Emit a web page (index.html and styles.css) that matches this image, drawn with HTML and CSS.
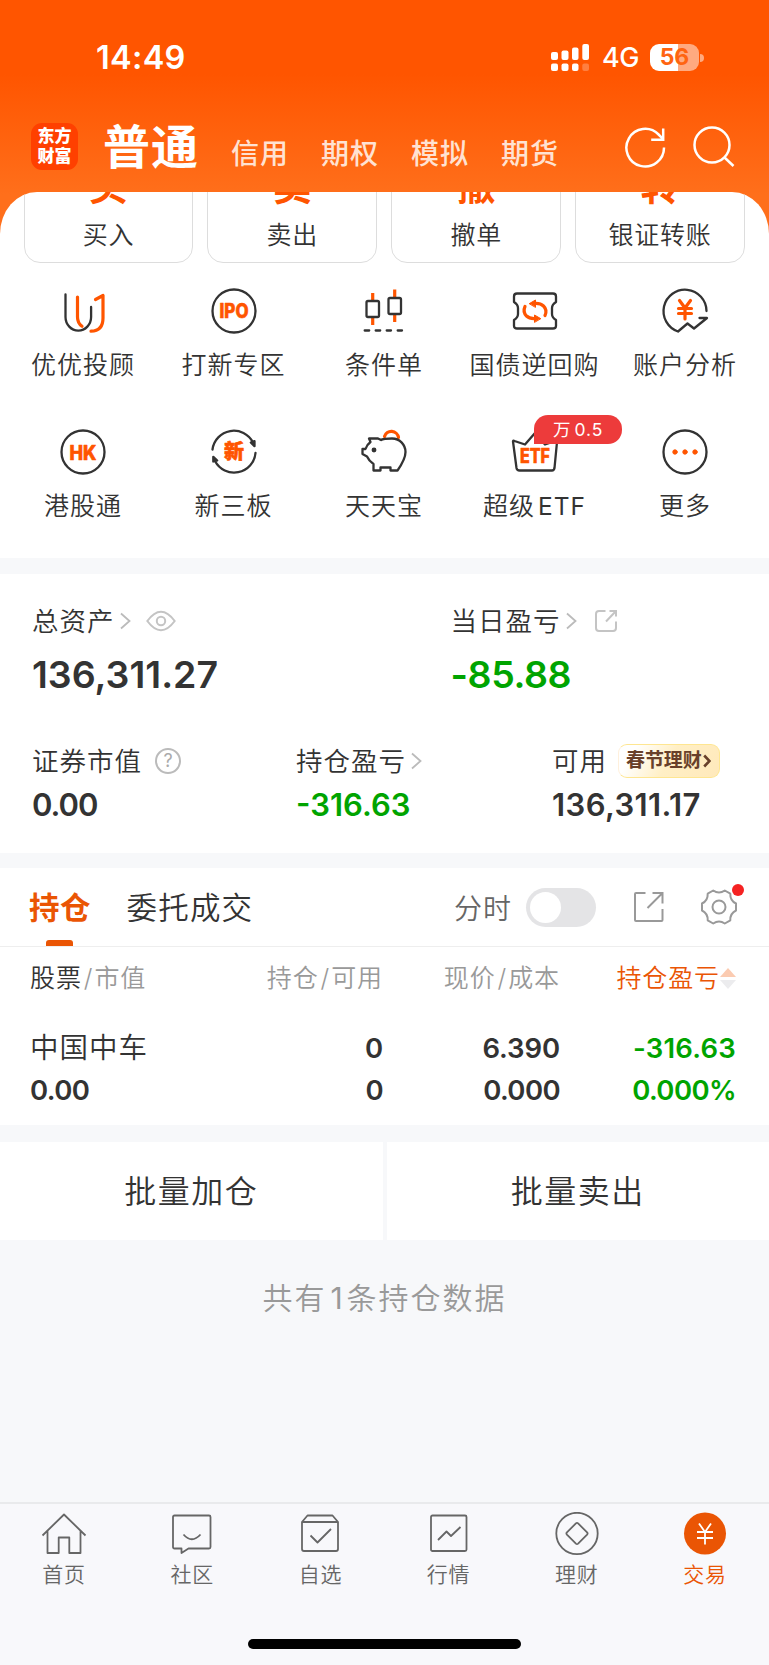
FILE: index.html
```html
<!DOCTYPE html>
<html lang="zh-CN">
<head>
    <meta charset="UTF-8">
    <meta name="viewport" content="width=device-width, initial-scale=1.0">
    <title>交易 - 东方财富</title>
    <link rel="stylesheet" href="styles.css">
</head>
<body>
    <div class="phone">
        <div class="status-bar">
            <div class="clock">14:49</div>
            <div class="status-icons">
                <svg class="signal" width="38" height="28" viewBox="0 0 38 28">
                    <rect x="0" y="8" width="7" height="8" rx="2"/><rect x="10.500" y="6.500" width="7" height="9.500" rx="2"/><rect x="21" y="3.500" width="6.500" height="12.500" rx="2"/><rect x="31.300" y="0" width="6.700" height="16" rx="2"/>
                    <rect x="0" y="19.500" width="7" height="7.500" rx="2"/><rect x="10.500" y="19.500" width="7" height="7.500" rx="2"/><rect x="21" y="19.500" width="6.500" height="7.500" rx="2"/><rect x="31.300" y="19.500" width="6.700" height="7.500" rx="2" opacity=".25"/>
                </svg>
                <span class="network">4G</span>
                <div class="battery">56</div>
                <div class="battery-tip"></div>
            </div>
        </div>

        <div class="nav">
            <div class="logo">东方<br>财富</div>
            <div class="nav-tabs">
                <div class="nav-tab active">普通</div>
                <div class="nav-tab">信用</div>
                <div class="nav-tab">期权</div>
                <div class="nav-tab">模拟</div>
                <div class="nav-tab">期货</div>
            </div>
            <svg class="nav-icon" width="44" height="44" viewBox="0 0 44 44"><path d="M41 22.500A18.800 18.800 0 1 1 35.600 9.500L39.500 13.500M40.200 3.500V14.800H28.200"/></svg>
            <svg class="nav-icon" width="44" height="44" viewBox="0 0 44 44"><circle cx="20" cy="20" r="17.500"/><path d="M32.500 32.500L41.500 41"/></svg>
        </div>

        <div class="sheet">
            <div class="cards">
                <div class="card"><b>买</b><span>买入</span></div>
                <div class="card"><b>卖</b><span>卖出</span></div>
                <div class="card"><b>撤</b><span>撤单</span></div>
                <div class="card"><b>转</b><span>银证转账</span></div>
            </div>
            <div class="services">
                <div class="service">
                    <svg class="icon" viewBox="0 0 46 46"><path d="M5.500 6.500V29a12.700 13.500 0 0 0 25.600 0V19"/><path class="o" d="M17.500 9V29Q17.500 35 22 38.300M35.500 11.500L43 7.500V30Q43 43 31 43.200"/></svg>
                    <span>优优投顾</span>
                </div>
                <div class="service">
                    <svg class="icon" viewBox="0 0 46 46"><circle cx="23" cy="23" r="21.500"/><text x="23" y="30" textLength="29" lengthAdjust="spacingAndGlyphs">IPO</text></svg>
                    <span>打新专区</span>
                </div>
                <div class="service">
                    <svg class="icon" viewBox="0 0 46 46"><path class="o c" d="M11.700 5V12M11.700 29.500V37M33.700 1.500V9M33.700 26.500V34"/><rect x="5.500" y="13" width="12.500" height="16" rx="1.500"/><rect x="27.500" y="10" width="12.500" height="16" rx="1.500"/><path d="M3.700 42.500H8.200M14.700 42.500H19.200M25.700 42.500H30M36.700 42.500H41"/></svg>
                    <span>条件单</span>
                </div>
                <div class="service">
                    <svg class="icon" viewBox="0 0 46 46"><path d="M5 5.500H41Q44 5.500 44 8.500V14Q40 16.500 40 20V26Q40 29.500 44 32V38Q44 40.500 41 40.500H5Q2 40.500 2 38V32Q6 29.500 6 26V20Q6 16.500 2 14V8.500Q2 5.500 5 5.500Z"/><path class="o" d="M13 18.500Q10.500 24 14.500 28Q17.500 30.800 23 30.500M33 27.500Q35.500 22 31.500 18Q28.500 15.200 23 15.500"/><path class="of" d="M17.500 15.500L23.500 12V19ZM28.500 30.500L22.500 27V34Z"/></svg>
                    <span>国债逆回购</span>
                </div>
                <div class="service">
                    <svg class="icon" viewBox="0 0 46 46"><path d="M44.500 23A21.500 21.500 0 1 0 16 43.500L25.500 35.500L32 40.500L45 30H37.500"/><path class="o" d="M17.500 12.500L23 20L28.500 12.500M16.500 20.500H29.500M16.500 25.500H29.500M23 20V31"/></svg>
                    <span>账户分析</span>
                </div>
                <div class="service">
                    <svg class="icon" viewBox="0 0 46 46"><circle cx="23" cy="23" r="21.500"/><text x="23" y="30.500" textLength="27" lengthAdjust="spacingAndGlyphs">HK</text></svg>
                    <span>港股通</span>
                </div>
                <div class="service">
                    <svg class="icon" viewBox="0 0 46 46"><path d="M1.500 20.500A21.500 21.500 0 0 1 42 13.500M44.500 24A21.500 21.500 0 0 1 4 32"/><path class="df" d="M39.800 13.500L43.500 12.200V17.200Z M6.200 31.500L2.300 32.500V27.800Z"/><text x="23" y="30" class="cn">新</text></svg>
                    <span>新三板</span>
                </div>
                <div class="service">
                    <svg class="icon" viewBox="0 0 46 46"><path class="o" d="M23.500 7.500A7.200 7.200 0 0 1 37.500 8.500"/><path d="M8 9.500H17L20 11Q22 9.500 31 9.500C39 9.500 44.500 16 44.500 23Q44.500 30 36.500 41.500H29.500V38.500H19.500V41.500H12.500V35Q8 32 6 27.500L1.500 25V20H4.500Q6 15.500 9.500 13Z"/><circle class="df" cx="13" cy="21" r="1.300"/></svg>
                    <span>天天宝</span>
                </div>
                <div class="service">
                    <svg class="icon" viewBox="0 0 46 46"><path d="M1 12.500Q1 11 2.500 12L13 15.500L23 4L33 15.500L43.500 12Q45 11.500 45 13L42.500 39Q42 41.500 40 41.500H7.500Q5 41.500 4.500 39Z"/><text x="23" y="34" textLength="30" lengthAdjust="spacingAndGlyphs">ETF</text></svg>
                    <div class="badge">万 0.5</div>
                    <span>超级<span class="latin">ETF</span></span>
                </div>
                <div class="service">
                    <svg class="icon" viewBox="0 0 46 46"><circle cx="23" cy="23" r="21.500"/><g class="of"><circle cx="13" cy="23" r="2.200"/><circle cx="23" cy="23" r="2.200"/><circle cx="33" cy="23" r="2.200"/></g></svg>
                    <span>更多</span>
                </div>
            </div>
        </div>

        <div class="assets">
            <div class="asset-row main-row">
                <div class="asset">
                    <div class="asset-label">总资产<svg class="arrow" width="11" height="18" viewBox="0 0 11 18"><path d="M1 1.500L9.500 9L1 16.500"/></svg>
                        <svg class="eye" width="30" height="22" viewBox="0 0 30 22"><path d="M1.300 11Q15-7.500 28.700 11Q15 29.500 1.300 11Z"/><circle cx="15" cy="11" r="4.200"/></svg>
                    </div>
                    <div class="asset-value big">136,311.27</div>
                </div>
                <div class="asset">
                    <div class="asset-label">当日盈亏<svg class="arrow" width="11" height="18" viewBox="0 0 11 18"><path d="M1 1.500L9.500 9L1 16.500"/></svg>
                        <svg class="share-sm" width="24" height="24" viewBox="0 0 24 24"><path d="M11.500 2H5Q2 2 2 5V19Q2 22 5 22H19Q22 22 22 19V12.500M12 12.500L22 2M15.500 2H22V7.500"/></svg>
                    </div>
                    <div class="asset-value big day green">-85.88</div>
                </div>
            </div>
            <div class="asset-row sub-row">
                <div class="asset">
                    <div class="asset-label">证券市值<div class="help">?</div></div>
                    <div class="asset-value zero">0.00</div>
                </div>
                <div class="asset">
                    <div class="asset-label">持仓盈亏<svg class="arrow" width="11" height="18" viewBox="0 0 11 18"><path d="M1 1.500L9.500 9L1 16.500"/></svg></div>
                    <div class="asset-value green">-316.63</div>
                </div>
                <div class="asset">
                    <div class="asset-label">可用<div class="promo">春节理财<svg width="8" height="14" viewBox="0 0 8 14"><path d="M1.200 1.500L6.500 7L1.200 12.500"/></svg></div></div>
                    <div class="asset-value cash">136,311.17</div>
                </div>
            </div>
        </div>

        <div class="holdings">
            <div class="toolbar">
                <div class="tab active">持仓</div>
                <div class="tab">委托成交</div>
                <div class="chart-label">分时</div>
                <div class="switch"></div>
                <svg class="share" width="32" height="32" viewBox="0 0 32 32"><path d="M12.500 2H3Q2 2 2 3V29Q2 30 3 30H28.500Q29.500 30 29.500 29V18M14.500 17L29.500 2M19.500 2H29.500V12.500"/></svg>
                <div class="settings">
                    <svg width="38" height="38" viewBox="0 0 38 38"><path d="M13.200 2.500Q19 6.500 24.800 2.500L30.300 5.700Q30 12.500 36 15.500V22.500Q30 25.500 30.300 32.300L24.800 35.500Q19 31.500 13.200 35.500L7.700 32.300Q8 25.500 2 22.500V15.500Q8 12.500 7.700 5.700Z"/><circle cx="19" cy="19" r="6.500"/></svg>
                    <i class="dot"></i>
                </div>
            </div>
            <div class="table">
                <div class="table-row table-head">
                    <div><em>股票</em><span class="sep">/</span>市值</div>
                    <div>持仓<span class="sep">/</span>可用</div>
                    <div>现价<span class="sep">/</span>成本</div>
                    <div class="sorted">持仓盈亏<svg width="16" height="21" viewBox="0 0 16 21"><path d="M8 0L16 9H0Z" fill="#fbcbb1"/><path d="M0 12H16L8 21Z" fill="#ececee"/></svg></div>
                </div>
                <div class="table-row first">
                    <div class="stock">中国中车</div><div>0</div><div>6.390</div><div class="profit green">-316.63</div>
                </div>
                <div class="table-row zeros">
                    <div>0.00</div><div>0</div><div>0.000</div><div class="green">0.000%</div>
                </div>
            </div>
        </div>

        <div class="batch">
            <div class="batch-btn">批量加仓</div>
            <div class="batch-btn">批量卖出</div>
        </div>
        <div class="summary">共有<span class="count">1</span>条持仓数据</div>

        <div class="tabbar">
            <div class="tabbar-item">
                <svg width="46" height="44" viewBox="0 0 46 44"><path d="M1.500 23.500L23 2.500L44.500 23.500M6.500 19V41H17.700V25.500H28.300V41H39.500V19"/></svg>
                <span>首页</span>
            </div>
            <div class="tabbar-item">
                <svg width="46" height="44" viewBox="0 0 46 44"><path d="M5.500 3.500H40Q41.500 3.500 41.500 5V35Q41.500 36.500 40 36.500H19.500L12.500 41V36.500H5.500Q4 36.500 4 35V5Q4 3.500 5.500 3.500ZM14.500 22.500Q22.700 32 31.500 22.500"/></svg>
                <span>社区</span>
            </div>
            <div class="tabbar-item">
                <svg width="46" height="44" viewBox="0 0 46 44"><path d="M5 10L10.500 3.500H35.500L41 10M5 10H41V37Q41 39 39 39H7Q5 39 5 37ZM13.500 23.500L20.500 30.500L34 17"/></svg>
                <span>自选</span>
            </div>
            <div class="tabbar-item">
                <svg width="46" height="44" viewBox="0 0 46 44"><rect x="5" y="3.500" width="35.500" height="35.500" rx="1.500"/><path d="M12 28L20.500 19.500L25 24L34.500 15"/></svg>
                <span>行情</span>
            </div>
            <div class="tabbar-item">
                <svg width="46" height="44" viewBox="0 0 46 44"><circle cx="23" cy="21.500" r="20.700"/><path d="M21.900 11.400L12.900 20.400Q11.900 21.500 12.900 22.600L21.900 31.600Q23 32.600 24.100 31.600L33.100 22.600Q34.100 21.500 33.100 20.400L24.100 11.400Q23 10.400 21.900 11.400Z"/></svg>
                <span>理财</span>
            </div>
            <div class="tabbar-item active">
                <svg width="46" height="44" viewBox="0 0 46 44"><circle class="fill" cx="23" cy="21.500" r="21"/><path class="yen" d="M17 11.500L23 20L29 11.500M15 20H31M15 26H31M23 20V32.500"/></svg>
                <span>交易</span>
            </div>
        </div>
        <div class="home-area"><div class="home-indicator"></div></div>
    </div>
</body>
</html>
```
FILE: styles.css
```css
* { box-sizing: border-box; }
body { margin: 0; background: #f7f8fa; color: #333; font-family: Inter, "Noto Sans CJK SC", sans-serif; font-weight: 350; overflow: hidden; }
svg { display: block; flex: none; fill: none; }
em, i { font-style: normal; }
.green { color: #00a400; }
.phone { width: 769px; height: 1665px; display: flex; flex-direction: column; background: linear-gradient(#ff5500 0, #ff5500 74px, #ff6f1b 195px) no-repeat 0 0 / 100% 250px; }

.status-bar { height: 115px; display: flex; justify-content: space-between; align-items: flex-start; padding: 38px 65px 0 96px; color: #fff; }
.clock { font-size: 32.500px; line-height: 39px; font-weight: 600; letter-spacing: .3px; }
.status-icons { display: flex; align-items: center; height: 39px; }
.signal { fill: #fff; }
.network { font-size: 27px; margin-left: 13px; font-weight: 500; width: 48px; letter-spacing: -.5px; }
.battery { width: 49px; height: 27px; border-radius: 9px; background: linear-gradient(90deg, #fff 57%, #ffaa80 57%); color: #ff6410; font-size: 23px; line-height: 27px; font-weight: 700; text-align: center; }
.battery-tip { width: 4px; height: 8px; margin-left: 1px; background: #ffaa80; border-radius: 0 4px 4px 0; }

.nav { height: 76.500px; display: flex; align-items: flex-start; padding-left: 31px; color: #fff; }
.logo { width: 47px; height: 47px; margin-top: 8px; border-radius: 11px; background: #ff4000; font-size: 17px; line-height: 19.500px; font-weight: 900; text-align: center; padding-top: 4px; }
.nav-tabs { display: flex; align-items: baseline; margin: -6px 0 0 25px; width: 520px; }
.nav-tab { font-size: 28px; line-height: 76px; width: 90px; letter-spacing: 1px; font-weight: 500; color: #ffe2d2; white-space: nowrap; }
.nav-tab.active { font-size: 47px; width: 128px; font-weight: 700; color: #fff; }
.nav-icon { margin-top: 10px; stroke: #fff; stroke-width: 2.500; }
.nav-icon + .nav-icon { margin-left: 25px; }

.sheet { height: 366.500px; flex: none; background: #fff; border-radius: 37px 37px 0 0 / 42px 42px 0 0; overflow: hidden; }
.cards { display: flex; gap: 14px; padding: 0 24px 0 23.500px; margin-top: -40.500px; }
.card { flex: 1; height: 112px; border: 1.500px solid #ddd; border-radius: 16px; display: flex; flex-direction: column; align-items: center; }
.card b { font-size: 39px; line-height: 40px; color: #ff5500; margin-top: 14px; }
.card span { font-size: 25px; line-height: 32px; margin-top: 12.500px; letter-spacing: .8px; }
.services { display: grid; grid-template-columns: repeat(5, 150.500px); justify-content: center; grid-auto-rows: 141px; padding: 25px 1px 0 0; }
.service { position: relative; display: flex; flex-direction: column; align-items: center; font-size: 25px; letter-spacing: 1px; line-height: 34px; white-space: nowrap; }
.service > span { margin-top: 14px; }
.latin { margin-left: 3px; font-size: 24.500px; font-weight: 400; }
.icon { width: 46px; height: 46px; stroke: #333; stroke-width: 2.300; stroke-linecap: round; stroke-linejoin: round; overflow: visible; }
.icon .o { stroke: #ff5500; stroke-width: 3.200; }
.icon .c { stroke-linecap: butt; }
.icon .of { fill: #ff5500; stroke: #ff5500; stroke-width: 1; }
.icon .df { fill: #333; }
.icon text { fill: #ff5500; stroke: #ff5500; stroke-width: .6; font: 800 19.500px Inter, sans-serif; letter-spacing: 0; text-anchor: middle; }
.icon text.cn { font: 900 20px "Noto Sans CJK SC", sans-serif; }
.badge { position: absolute; left: 75px; top: -14px; width: 88px; height: 29px; background: #ed3b3b; color: #fff; border-radius: 14px 14px 14px 0; font-size: 17.500px; font-weight: 400; line-height: 29px; text-align: center; word-spacing: -3px; }

.assets { height: 295px; flex: none; border-top: 16px solid #f7f8fa; background: #fff; }
.asset-row { display: grid; padding-left: 32px; }
.main-row { grid-template-columns: 418.500px 1fr; padding-top: 28px; }
.sub-row { grid-template-columns: 264px 256px 1fr; padding-top: 44px; }
.asset-label { display: flex; align-items: center; height: 38px; line-height: 36px; font-size: 26.500px; letter-spacing: 1px; white-space: nowrap; }
.asset-value { font-size: 31px; line-height: 38px; margin-top: 6px; font-weight: 600; }
.asset-value.big { font-size: 37.500px; line-height: 46px; margin-top: 11.500px; }
.asset-value.day { letter-spacing: -.4px; }
.asset-value.zero { letter-spacing: -1px; }
.asset-value.cash { letter-spacing: .4px; }
.arrow { stroke: #bbb; stroke-width: 1.800; margin-left: 5px; }
.eye { stroke: #c4c4c4; stroke-width: 2; margin-left: 15px; }
.share-sm { stroke: #c4c4c4; stroke-width: 2; margin-left: 17px; }
.help { width: 26px; height: 26px; border: 2px solid #bbb; border-radius: 50%; margin-left: 13px; font-size: 18px; font-weight: 400; line-height: 22px; letter-spacing: 0; text-align: center; color: #aaa; }
.promo { width: 102px; height: 34px; margin-left: 11px; padding-left: 7px; display: flex; align-items: center; gap: 1px; border: 1.500px solid #fee691; border-left-color: #fff0dc; border-radius: 9px; background: linear-gradient(120deg, #fff 15%, #ffefc5 50%, #ffe9bb); color: #68402a; font-size: 19px; font-weight: 700; letter-spacing: -.1px; }
.promo svg { stroke: #68402a; stroke-width: 2.600; }

.holdings { height: 272px; flex: none; border-top: 15px solid #f7f8fa; background: #fff; }
.toolbar { height: 79px; display: flex; align-items: center; padding-left: 29px; border-bottom: 1px solid #eee; }
.tab { position: relative; height: 78px; line-height: 80px; font-size: 30.500px; letter-spacing: 1.200px; white-space: nowrap; }
.tab.active { color: #ea5504; font-weight: 700; width: 97.500px; letter-spacing: .5px; }
.tab.active::after { content: ""; position: absolute; left: 17px; bottom: 0; width: 27px; height: 6px; border-radius: 3px 3px 0 0; background: #ea5504; }
.chart-label { margin-left: auto; font-size: 28px; letter-spacing: 1px; color: #666; }
.switch { width: 70px; height: 39px; margin-left: 14px; padding: 4px; border-radius: 20px; background: #e4e4e6; }
.switch::before { content: ""; display: block; width: 31px; height: 31px; border-radius: 50%; background: #fff; }
.share { margin-left: 37px; stroke: #999; stroke-width: 2; }
.settings { position: relative; margin: 0 31px 0 35px; stroke: #999; stroke-width: 2; stroke-linejoin: round; }
.dot { position: absolute; right: -6px; top: -4px; width: 12px; height: 12px; border-radius: 50%; background: #f52222; }
.table-row { display: grid; grid-template-columns: 160px 193px 177px 176px; padding-left: 30px; height: 42px; line-height: 42px; font-size: 27.500px; font-weight: 600; letter-spacing: -.1px; text-align: right; }
.table-row > :first-child { text-align: left; }
.table-row.first { margin-top: 30px; }
.table-row.zeros { letter-spacing: -.6px; }
.table-head { height: 37px; line-height: 37px; margin-top: 13px; font-size: 25px; font-weight: 350; letter-spacing: .9px; color: #999; white-space: nowrap; }
.table-head em { color: #333; }
.sep { margin: 0 1px 0 2px; }
.sorted { display: flex; justify-content: flex-end; align-items: center; color: #ea5504; }
.table-row .stock { font-size: 28.500px; font-weight: 350; letter-spacing: 1px; }
.table-row .profit { letter-spacing: .2px; }

.batch { height: 115px; flex: none; display: flex; gap: 4px; border-top: 17px solid #f7f8fa; background: #f7f8fa; }
.batch-btn { flex: 1; background: #fff; font-size: 32px; line-height: 99px; letter-spacing: 1.500px; text-align: center; }
.summary { height: 262px; flex: none; background: #f7f8fa; color: #999; font-size: 30px; line-height: 40px; padding-top: 38px; letter-spacing: 2px; text-align: center; }
.count { margin: 0 2px 0 4px; font-weight: 400; }

.tabbar { height: 100px; flex: none; display: flex; background: #f8f8fb; border-top: 2px solid #e9eaec; padding-top: 8px; }
.tabbar-item { flex: 1; display: flex; flex-direction: column; align-items: center; font-size: 21px; line-height: 28px; letter-spacing: .8px; color: #666; }
.tabbar-item svg { stroke: #666; stroke-width: 1.800; stroke-linejoin: round; }
.tabbar-item span { margin-top: 5px; }
.tabbar-item.active { color: #ea5504; }
.tabbar-item .fill { fill: #ea5504; stroke: none; }
.tabbar-item .yen { stroke: #fff; }
.home-area { flex: 1; padding-top: 37px; background: #f8f8fb; }
.home-indicator { width: 273px; height: 10px; margin: 0 auto; border-radius: 5px; background: #000; }
```
